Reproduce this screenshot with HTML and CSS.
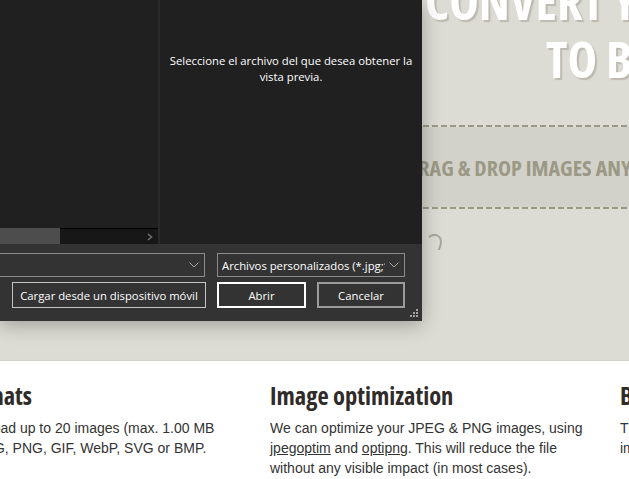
FILE: index.html
```html
<!DOCTYPE html>
<html>
<head>
<meta charset="utf-8">
<link rel="stylesheet" href="styles.css">
</head>
<body>
<div class="page">
  <section class="hero">
    <h1 class="hero-title">
      <span class="line l1">CONVERT YOUR IMAGES</span>
      <span class="line l2">TO BASE64</span>
    </h1>
    <div class="drop">
      <div class="drop-inner">DRAG &amp; DROP IMAGES ANYWHERE</div>
    </div>
    <svg class="doodle" width="20" height="22" viewBox="0 0 20 22"><path d="M1 3 C6 -1 13 1 13 8 C13 12 11 14 11 16" fill="none" stroke="#a8a79c" stroke-width="2"/></svg>
  </section>
  <section class="features">
    <div class="feature">
      <h2>File formats</h2>
      <p>You can upload up to 20 images (max. 1.00 MB each) as JPG, PNG, GIF, WebP, SVG or BMP.</p>
    </div>
    <div class="feature">
      <h2>Image optimization</h2>
      <p>We can optimize your JPEG &amp; PNG images, using <a href="#">jpegoptim</a> and <a href="#">optipng</a>. This will reduce the file without any visible impact (in most cases).</p>
    </div>
    <div class="feature">
      <h2>Base64 encoding</h2>
      <p>The encoding process runs in your browser, the images never leave this machine.</p>
    </div>
  </section>
</div>

<div class="dialog">
  <div class="dlg-top">
    <div class="nav-pane">
      <div class="nav-list"></div>
      <div class="hscroll">
        <div class="thumb"></div>
        <div class="track"><span class="arrow">
          <svg width="6" height="8" viewBox="0 0 6 8"><path d="M1 1 L4.5 4 L1 7" fill="none" stroke="#6e6e6e" stroke-width="1.6"/></svg>
        </span></div>
      </div>
    </div>
    <div class="splitter"></div>
    <div class="preview">Seleccione el archivo del que desea obtener la vista previa.</div>
  </div>
  <div class="dlg-bottom">
    <div class="row">
      <div class="combo name">
        <span class="combo-text"></span>
        <svg class="chev" width="10" height="6" viewBox="0 0 10 6"><path d="M0.5 0.5 L5 5 L9.5 0.5" fill="none" stroke="#a8a8a8" stroke-width="1"/></svg>
      </div>
      <div class="combo filter">
        <span class="combo-text">Archivos personalizados (*.jpg;*.jpeg;*.png;*.gif)</span>
        <svg class="chev" width="10" height="6" viewBox="0 0 10 6"><path d="M0.5 0.5 L5 5 L9.5 0.5" fill="none" stroke="#a8a8a8" stroke-width="1"/></svg>
      </div>
    </div>
    <div class="row">
      <button class="btn mobile">Cargar desde un dispositivo móvil</button>
      <button class="btn primary">Abrir</button>
      <button class="btn cancel">Cancelar</button>
    </div>
    <svg class="grip" width="9" height="9" viewBox="0 0 9 9" fill="#a0a0a0">
      <rect x="6" y="0" width="2" height="2"/>
      <rect x="3" y="3" width="2" height="2"/><rect x="6" y="3" width="2" height="2"/>
      <rect x="0" y="6" width="2" height="2"/><rect x="3" y="6" width="2" height="2"/><rect x="6" y="6" width="2" height="2"/>
    </svg>
  </div>
</div>
</body>
</html>
```
FILE: styles.css
```css
html, body {
  margin: 0;
  padding: 0;
}
body {
  width: 629px;
  height: 479px;
  overflow: hidden;
  background: #ffffff;
  position: relative;
}
.page {
  width: 629px;
  overflow: hidden;
}

/* Hero */
.hero {
  position: relative;
  height: 360px;
  background: #dcdbd4;
  border-bottom: 1px solid #d2d1ca;
  overflow: hidden;
}
.hero-title {
  margin: 0;
  font-family: "Open Sans", sans-serif;
  font-stretch: 80%;
  font-weight: 700;
  font-size: 50px;
  line-height: 58px;
  color: #ffffff;
  text-shadow: 2px 2px 1px rgba(120, 110, 90, 0.3);
  white-space: nowrap;
  margin-top: -28px;
}
.hero-title .line {
  display: block;
}
.hero-title .l1 { margin-left: 425px; }
.hero-title .l2 { margin-left: 546px; }

.drop {
  margin-top: 37px;
  height: 80px;
  padding: 2px 0;
  background-image:
    repeating-linear-gradient(90deg, #9a9985 0 6px, transparent 6px 9px),
    repeating-linear-gradient(90deg, #9a9985 0 6px, transparent 6px 9px);
  background-size: 100% 2px, 100% 2px;
  background-position: 0 0, 0 100%;
  background-repeat: no-repeat;
}
.drop-inner {
  height: 100%;
  background: #d3d2ca;
  font-family: "Open Sans", sans-serif;
  font-stretch: 80%;
  font-weight: 700;
  font-size: 22px;
  line-height: 80px;
  color: #9b9985;
  white-space: nowrap;
  padding-left: 406px;
}
.doodle {
  position: absolute;
  left: 428px;
  top: 234px;
}

/* Features */
.features {
  display: grid;
  grid-template-columns: repeat(3, 320px);
  column-gap: 30px;
  margin-left: -80px;
  padding-top: 19px;
}
.feature h2 {
  margin: 0;
  font-family: "Open Sans", sans-serif;
  font-stretch: 75%;
  font-weight: 700;
  font-size: 24.5px;
  line-height: 32px;
  color: #2f2b28;
  white-space: nowrap;
}
.feature p {
  margin: 6px 0 0;
  font-family: "Liberation Sans", Arial, sans-serif;
  font-size: 14px;
  line-height: 20px;
  color: #333333;
}
.feature a {
  color: #333333;
  text-decoration: underline;
}

/* Dialog */
.dialog {
  position: absolute;
  left: 0;
  top: 0;
  width: 422px;
  height: 321px;
  display: flex;
  flex-direction: column;
  background: #333333;
  box-shadow: 0 4px 18px rgba(0, 0, 0, 0.28);
  font-family: "Open Sans", "Noto Sans", sans-serif;
  font-stretch: 88%;
  font-size: 11.3px;
  color: #ffffff;
}
.dlg-top {
  display: flex;
  height: 244px;
  background: #202020;
}
.nav-pane {
  width: 158px;
  display: flex;
  flex-direction: column;
}
.nav-list {
  flex: 1;
}
.hscroll {
  display: flex;
  height: 16px;
}
.hscroll .thumb {
  width: 60px;
  background: #4d4d4d;
}
.hscroll .track {
  flex: 1;
  background: #171717;
  border-top: 1px solid #000;
  display: flex;
  justify-content: flex-end;
  align-items: center;
  padding-right: 5px;
}
.arrow svg { display: block; }
.splitter {
  width: 2px;
  background: #2a2a2a;
}
.preview {
  flex: 1;
  padding: 53px 2px 0;
  text-align: center;
  line-height: 16px;
}

.dlg-bottom {
  flex: 1;
  position: relative;
  padding: 9px 0 0;
}
.row {
  display: flex;
  height: 24px;
  margin-bottom: 5px;
}
.row + .row {
  height: 26px;
}
.combo {
  box-sizing: border-box;
  height: 24px;
  border: 1px solid #8b8b8b;
  display: flex;
  align-items: center;
  padding: 0 5px 0 4px;
}
.combo.name {
  width: 305px;
  margin-left: -100px;
}
.combo.filter {
  width: 188px;
  margin-left: 12px;
}
.combo-text {
  flex: 1;
  overflow: hidden;
  white-space: nowrap;
}
.chev { flex: none; margin-left: 4px; }

.btn {
  box-sizing: border-box;
  height: 26px;
  background: #333333;
  color: #ffffff;
  font-family: "Open Sans", "Noto Sans", sans-serif;
  font-stretch: 88%;
  font-size: 11.3px;
  padding: 0;
  border: 1px solid #c4c4c4;
}
.btn.mobile {
  width: 194px;
  margin-left: 12px;
}
.btn.primary {
  width: 89px;
  margin-left: 11px;
  border: 2px solid #ffffff;
}
.btn.cancel {
  width: 88px;
  margin-left: 11px;
  border: 2px solid #9b9b9b;
}
.grip {
  position: absolute;
  right: 3px;
  bottom: 3px;
}
```
